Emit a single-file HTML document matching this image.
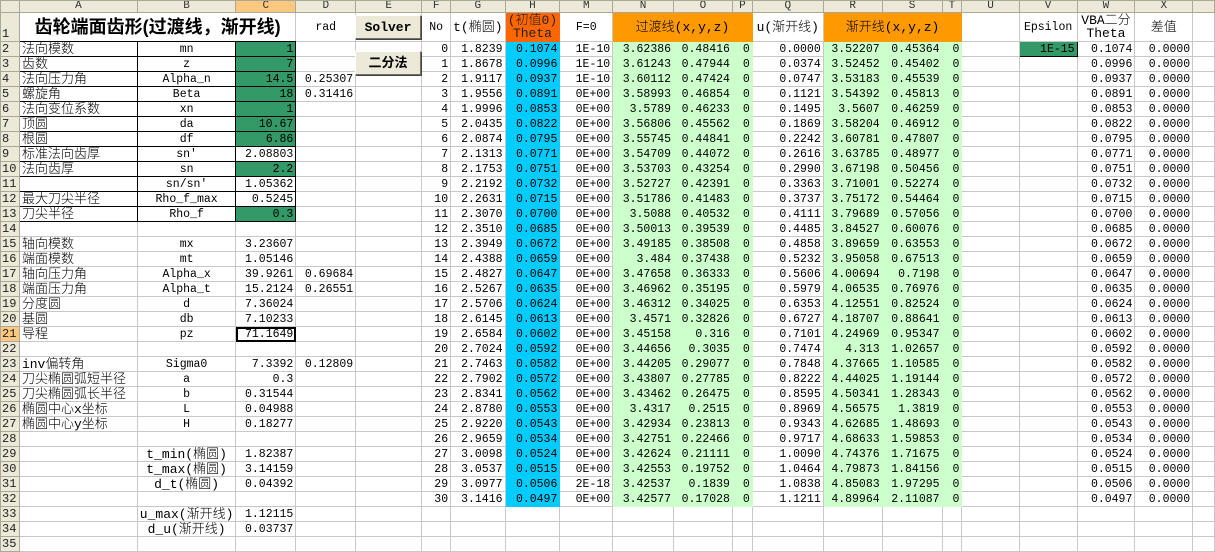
<!DOCTYPE html>
<html><head><meta charset="utf-8"><style>
body{margin:0;width:1215px;height:545px;overflow:hidden;background:#fff;position:relative}
table{border-collapse:collapse;table-layout:fixed;position:absolute;left:0;top:0;font-family:"Liberation Mono","Noto Serif CJK SC",monospace;font-size:11.5px;color:#000}
tr{height:15px}
td{border:1px solid #c8c8c8;height:14px;line-height:13px;padding:0 2px;white-space:nowrap;overflow:hidden;text-align:right;box-sizing:border-box}
tr.h{height:12px}
tr.h td{background:#ece9d8;border-color:#aca899;height:12px;line-height:11px;text-align:center;font-size:11px;color:#333}
td.rh{background:#ece9d8;border-color:#aca899;text-align:left;padding:0 0 0 1px;font-size:12px;color:#222}
td.sel{background:#ffc880}
td.l{text-align:left}
td.c{text-align:center}
.k{font-size:13px;line-height:13px;font-family:"Liberation Mono","Noto Sans CJK SC",sans-serif;font-weight:300}
td.b{border:1px solid #000}
td.gd{background:#339966;border:1px solid #000}
td.cy{background:#00ccff;border-color:#00ccff}
td.g{background:#ccffcc;border-color:#ccffcc}
td.or{background:#ff9900;border-color:#ff9900}
td.orr{background:#ff6600;border-color:#ff6600}
.btn{position:absolute;left:355px;width:66px;height:24px;background:#ece9d8;border:1px solid;border-color:#fff #716f64 #716f64 #fff;box-shadow:1px 1px 0 #444;font:bold 13px "Liberation Mono","Noto Sans CJK SC",monospace;text-align:center;line-height:24px;box-sizing:border-box}
</style></head><body>
<table>
<colgroup><col style="width:19px"><col style="width:118px"><col style="width:96px"><col style="width:60px"><col style="width:60px"><col style="width:67px"><col style="width:29px"><col style="width:54px"><col style="width:55px"><col style="width:53px"><col style="width:61px"><col style="width:59px"><col style="width:20px"><col style="width:71px"><col style="width:59px"><col style="width:60px"><col style="width:20px"><col style="width:58px"><col style="width:58px"><col style="width:58px"><col style="width:58px"><col style="width:22px"></colgroup>
<tr class="h"><td></td><td>A</td><td>B</td><td style="background:#ffc880">C</td><td>D</td><td>E</td><td>F</td><td>G</td><td>H</td><td>M</td><td>N</td><td>O</td><td>P</td><td>Q</td><td>R</td><td>S</td><td>T</td><td>U</td><td>V</td><td>W</td><td>X</td><td></td></tr>
<tr style="height:29px"><td class="rh" style="vertical-align:bottom">1</td><td colspan="3" class="c" style="font:bold 18px 'Liberation Sans','Noto Sans CJK SC',sans-serif;line-height:26px;border-bottom:1px solid #000">齿轮端面齿形(过渡线，渐开线)</td><td class="c">rad</td><td></td><td class="c">No</td><td class="c k">t(椭圆)</td><td class="orr c k" style="white-space:normal;color:#222">(初值0) Theta</td><td class="c">F=0</td><td colspan="3" class="or c k">过渡线(x,y,z)</td><td class="c k">u(渐开线)</td><td colspan="3" class="or c k">渐开线(x,y,z)</td><td></td><td class="c">Epsilon</td><td class="c k" style="white-space:normal">VBA二分 Theta</td><td class="c k">差值</td><td></td></tr>
<tr><td class="rh">2</td><td class="b l k">法向模数</td><td class="b c">mn</td><td class="gd">1</td><td></td><td></td><td>0</td><td>1.8239</td><td class="cy">0.1074</td><td>1E-10</td><td class="g">3.62386</td><td class="g">0.48416</td><td class="g">0</td><td>0.0000</td><td class="g">3.52207</td><td class="g">0.45364</td><td class="g">0</td><td></td><td class="gd">1E-15</td><td>0.1074</td><td>0.0000</td><td></td></tr>
<tr><td class="rh">3</td><td class="b l k">齿数</td><td class="b c">z</td><td class="gd">7</td><td></td><td></td><td>1</td><td>1.8678</td><td class="cy">0.0996</td><td>1E-10</td><td class="g">3.61243</td><td class="g">0.47944</td><td class="g">0</td><td>0.0374</td><td class="g">3.52452</td><td class="g">0.45402</td><td class="g">0</td><td></td><td></td><td>0.0996</td><td>0.0000</td><td></td></tr>
<tr><td class="rh">4</td><td class="b l k">法向压力角</td><td class="b c">Alpha_n</td><td class="gd">14.5</td><td>0.25307</td><td></td><td>2</td><td>1.9117</td><td class="cy">0.0937</td><td>1E-10</td><td class="g">3.60112</td><td class="g">0.47424</td><td class="g">0</td><td>0.0747</td><td class="g">3.53183</td><td class="g">0.45539</td><td class="g">0</td><td></td><td></td><td>0.0937</td><td>0.0000</td><td></td></tr>
<tr><td class="rh">5</td><td class="b l k">螺旋角</td><td class="b c">Beta</td><td class="gd">18</td><td>0.31416</td><td></td><td>3</td><td>1.9556</td><td class="cy">0.0891</td><td>0E+00</td><td class="g">3.58993</td><td class="g">0.46854</td><td class="g">0</td><td>0.1121</td><td class="g">3.54392</td><td class="g">0.45813</td><td class="g">0</td><td></td><td></td><td>0.0891</td><td>0.0000</td><td></td></tr>
<tr><td class="rh">6</td><td class="b l k">法向变位系数</td><td class="b c">xn</td><td class="gd">1</td><td></td><td></td><td>4</td><td>1.9996</td><td class="cy">0.0853</td><td>0E+00</td><td class="g">3.5789</td><td class="g">0.46233</td><td class="g">0</td><td>0.1495</td><td class="g">3.5607</td><td class="g">0.46259</td><td class="g">0</td><td></td><td></td><td>0.0853</td><td>0.0000</td><td></td></tr>
<tr><td class="rh">7</td><td class="b l k">顶圆</td><td class="b c">da</td><td class="gd">10.67</td><td></td><td></td><td>5</td><td>2.0435</td><td class="cy">0.0822</td><td>0E+00</td><td class="g">3.56806</td><td class="g">0.45562</td><td class="g">0</td><td>0.1869</td><td class="g">3.58204</td><td class="g">0.46912</td><td class="g">0</td><td></td><td></td><td>0.0822</td><td>0.0000</td><td></td></tr>
<tr><td class="rh">8</td><td class="b l k">根圆</td><td class="b c">df</td><td class="gd">6.86</td><td></td><td></td><td>6</td><td>2.0874</td><td class="cy">0.0795</td><td>0E+00</td><td class="g">3.55745</td><td class="g">0.44841</td><td class="g">0</td><td>0.2242</td><td class="g">3.60781</td><td class="g">0.47807</td><td class="g">0</td><td></td><td></td><td>0.0795</td><td>0.0000</td><td></td></tr>
<tr><td class="rh">9</td><td class="b l k">标准法向齿厚</td><td class="b c">sn'</td><td class="b">2.08803</td><td></td><td></td><td>7</td><td>2.1313</td><td class="cy">0.0771</td><td>0E+00</td><td class="g">3.54709</td><td class="g">0.44072</td><td class="g">0</td><td>0.2616</td><td class="g">3.63785</td><td class="g">0.48977</td><td class="g">0</td><td></td><td></td><td>0.0771</td><td>0.0000</td><td></td></tr>
<tr><td class="rh">10</td><td class="b l k">法向齿厚</td><td class="b c">sn</td><td class="gd">2.2</td><td></td><td></td><td>8</td><td>2.1753</td><td class="cy">0.0751</td><td>0E+00</td><td class="g">3.53703</td><td class="g">0.43254</td><td class="g">0</td><td>0.2990</td><td class="g">3.67198</td><td class="g">0.50456</td><td class="g">0</td><td></td><td></td><td>0.0751</td><td>0.0000</td><td></td></tr>
<tr><td class="rh">11</td><td class="b l"></td><td class="b c">sn/sn'</td><td class="b">1.05362</td><td></td><td></td><td>9</td><td>2.2192</td><td class="cy">0.0732</td><td>0E+00</td><td class="g">3.52727</td><td class="g">0.42391</td><td class="g">0</td><td>0.3363</td><td class="g">3.71001</td><td class="g">0.52274</td><td class="g">0</td><td></td><td></td><td>0.0732</td><td>0.0000</td><td></td></tr>
<tr><td class="rh">12</td><td class="b l k">最大刀尖半径</td><td class="b c">Rho_f_max</td><td class="b">0.5245</td><td></td><td></td><td>10</td><td>2.2631</td><td class="cy">0.0715</td><td>0E+00</td><td class="g">3.51786</td><td class="g">0.41483</td><td class="g">0</td><td>0.3737</td><td class="g">3.75172</td><td class="g">0.54464</td><td class="g">0</td><td></td><td></td><td>0.0715</td><td>0.0000</td><td></td></tr>
<tr><td class="rh">13</td><td class="b l k">刀尖半径</td><td class="b c">Rho_f</td><td class="gd">0.3</td><td></td><td></td><td>11</td><td>2.3070</td><td class="cy">0.0700</td><td>0E+00</td><td class="g">3.5088</td><td class="g">0.40532</td><td class="g">0</td><td>0.4111</td><td class="g">3.79689</td><td class="g">0.57056</td><td class="g">0</td><td></td><td></td><td>0.0700</td><td>0.0000</td><td></td></tr>
<tr><td class="rh">14</td><td></td><td></td><td></td><td></td><td></td><td>12</td><td>2.3510</td><td class="cy">0.0685</td><td>0E+00</td><td class="g">3.50013</td><td class="g">0.39539</td><td class="g">0</td><td>0.4485</td><td class="g">3.84527</td><td class="g">0.60076</td><td class="g">0</td><td></td><td></td><td>0.0685</td><td>0.0000</td><td></td></tr>
<tr><td class="rh">15</td><td class="l k">轴向模数</td><td class="c">mx</td><td>3.23607</td><td></td><td></td><td>13</td><td>2.3949</td><td class="cy">0.0672</td><td>0E+00</td><td class="g">3.49185</td><td class="g">0.38508</td><td class="g">0</td><td>0.4858</td><td class="g">3.89659</td><td class="g">0.63553</td><td class="g">0</td><td></td><td></td><td>0.0672</td><td>0.0000</td><td></td></tr>
<tr><td class="rh">16</td><td class="l k">端面模数</td><td class="c">mt</td><td>1.05146</td><td></td><td></td><td>14</td><td>2.4388</td><td class="cy">0.0659</td><td>0E+00</td><td class="g">3.484</td><td class="g">0.37438</td><td class="g">0</td><td>0.5232</td><td class="g">3.95058</td><td class="g">0.67513</td><td class="g">0</td><td></td><td></td><td>0.0659</td><td>0.0000</td><td></td></tr>
<tr><td class="rh">17</td><td class="l k">轴向压力角</td><td class="c">Alpha_x</td><td>39.9261</td><td>0.69684</td><td></td><td>15</td><td>2.4827</td><td class="cy">0.0647</td><td>0E+00</td><td class="g">3.47658</td><td class="g">0.36333</td><td class="g">0</td><td>0.5606</td><td class="g">4.00694</td><td class="g">0.7198</td><td class="g">0</td><td></td><td></td><td>0.0647</td><td>0.0000</td><td></td></tr>
<tr><td class="rh">18</td><td class="l k">端面压力角</td><td class="c">Alpha_t</td><td>15.2124</td><td>0.26551</td><td></td><td>16</td><td>2.5267</td><td class="cy">0.0635</td><td>0E+00</td><td class="g">3.46962</td><td class="g">0.35195</td><td class="g">0</td><td>0.5979</td><td class="g">4.06535</td><td class="g">0.76976</td><td class="g">0</td><td></td><td></td><td>0.0635</td><td>0.0000</td><td></td></tr>
<tr><td class="rh">19</td><td class="l k">分度圆</td><td class="c">d</td><td>7.36024</td><td></td><td></td><td>17</td><td>2.5706</td><td class="cy">0.0624</td><td>0E+00</td><td class="g">3.46312</td><td class="g">0.34025</td><td class="g">0</td><td>0.6353</td><td class="g">4.12551</td><td class="g">0.82524</td><td class="g">0</td><td></td><td></td><td>0.0624</td><td>0.0000</td><td></td></tr>
<tr><td class="rh">20</td><td class="l k">基圆</td><td class="c">db</td><td>7.10233</td><td></td><td></td><td>18</td><td>2.6145</td><td class="cy">0.0613</td><td>0E+00</td><td class="g">3.4571</td><td class="g">0.32826</td><td class="g">0</td><td>0.6727</td><td class="g">4.18707</td><td class="g">0.88641</td><td class="g">0</td><td></td><td></td><td>0.0613</td><td>0.0000</td><td></td></tr>
<tr><td class="rh sel">21</td><td class="l k">导程</td><td class="c">pz</td><td style="outline:2px solid #000;outline-offset:-2px">71.1649</td><td></td><td></td><td>19</td><td>2.6584</td><td class="cy">0.0602</td><td>0E+00</td><td class="g">3.45158</td><td class="g">0.316</td><td class="g">0</td><td>0.7101</td><td class="g">4.24969</td><td class="g">0.95347</td><td class="g">0</td><td></td><td></td><td>0.0602</td><td>0.0000</td><td></td></tr>
<tr><td class="rh">22</td><td></td><td></td><td></td><td></td><td></td><td>20</td><td>2.7024</td><td class="cy">0.0592</td><td>0E+00</td><td class="g">3.44656</td><td class="g">0.3035</td><td class="g">0</td><td>0.7474</td><td class="g">4.313</td><td class="g">1.02657</td><td class="g">0</td><td></td><td></td><td>0.0592</td><td>0.0000</td><td></td></tr>
<tr><td class="rh">23</td><td class="l k">inv偏转角</td><td class="c">Sigma0</td><td>7.3392</td><td>0.12809</td><td></td><td>21</td><td>2.7463</td><td class="cy">0.0582</td><td>0E+00</td><td class="g">3.44205</td><td class="g">0.29077</td><td class="g">0</td><td>0.7848</td><td class="g">4.37665</td><td class="g">1.10585</td><td class="g">0</td><td></td><td></td><td>0.0582</td><td>0.0000</td><td></td></tr>
<tr><td class="rh">24</td><td class="l k">刀尖椭圆弧短半径</td><td class="c">a</td><td>0.3</td><td></td><td></td><td>22</td><td>2.7902</td><td class="cy">0.0572</td><td>0E+00</td><td class="g">3.43807</td><td class="g">0.27785</td><td class="g">0</td><td>0.8222</td><td class="g">4.44025</td><td class="g">1.19144</td><td class="g">0</td><td></td><td></td><td>0.0572</td><td>0.0000</td><td></td></tr>
<tr><td class="rh">25</td><td class="l k">刀尖椭圆弧长半径</td><td class="c">b</td><td>0.31544</td><td></td><td></td><td>23</td><td>2.8341</td><td class="cy">0.0562</td><td>0E+00</td><td class="g">3.43462</td><td class="g">0.26475</td><td class="g">0</td><td>0.8595</td><td class="g">4.50341</td><td class="g">1.28343</td><td class="g">0</td><td></td><td></td><td>0.0562</td><td>0.0000</td><td></td></tr>
<tr><td class="rh">26</td><td class="l k">椭圆中心x坐标</td><td class="c">L</td><td>0.04988</td><td></td><td></td><td>24</td><td>2.8780</td><td class="cy">0.0553</td><td>0E+00</td><td class="g">3.4317</td><td class="g">0.2515</td><td class="g">0</td><td>0.8969</td><td class="g">4.56575</td><td class="g">1.3819</td><td class="g">0</td><td></td><td></td><td>0.0553</td><td>0.0000</td><td></td></tr>
<tr><td class="rh">27</td><td class="l k">椭圆中心y坐标</td><td class="c">H</td><td>0.18277</td><td></td><td></td><td>25</td><td>2.9220</td><td class="cy">0.0543</td><td>0E+00</td><td class="g">3.42934</td><td class="g">0.23813</td><td class="g">0</td><td>0.9343</td><td class="g">4.62685</td><td class="g">1.48693</td><td class="g">0</td><td></td><td></td><td>0.0543</td><td>0.0000</td><td></td></tr>
<tr><td class="rh">28</td><td></td><td></td><td></td><td></td><td></td><td>26</td><td>2.9659</td><td class="cy">0.0534</td><td>0E+00</td><td class="g">3.42751</td><td class="g">0.22466</td><td class="g">0</td><td>0.9717</td><td class="g">4.68633</td><td class="g">1.59853</td><td class="g">0</td><td></td><td></td><td>0.0534</td><td>0.0000</td><td></td></tr>
<tr><td class="rh">29</td><td></td><td class="c k">t_min(椭圆)</td><td>1.82387</td><td></td><td></td><td>27</td><td>3.0098</td><td class="cy">0.0524</td><td>0E+00</td><td class="g">3.42624</td><td class="g">0.21111</td><td class="g">0</td><td>1.0090</td><td class="g">4.74376</td><td class="g">1.71675</td><td class="g">0</td><td></td><td></td><td>0.0524</td><td>0.0000</td><td></td></tr>
<tr><td class="rh">30</td><td></td><td class="c k">t_max(椭圆)</td><td>3.14159</td><td></td><td></td><td>28</td><td>3.0537</td><td class="cy">0.0515</td><td>0E+00</td><td class="g">3.42553</td><td class="g">0.19752</td><td class="g">0</td><td>1.0464</td><td class="g">4.79873</td><td class="g">1.84156</td><td class="g">0</td><td></td><td></td><td>0.0515</td><td>0.0000</td><td></td></tr>
<tr><td class="rh">31</td><td></td><td class="c k">d_t(椭圆)</td><td>0.04392</td><td></td><td></td><td>29</td><td>3.0977</td><td class="cy">0.0506</td><td>2E-18</td><td class="g">3.42537</td><td class="g">0.1839</td><td class="g">0</td><td>1.0838</td><td class="g">4.85083</td><td class="g">1.97295</td><td class="g">0</td><td></td><td></td><td>0.0506</td><td>0.0000</td><td></td></tr>
<tr><td class="rh">32</td><td></td><td></td><td></td><td></td><td></td><td>30</td><td>3.1416</td><td class="cy">0.0497</td><td>0E+00</td><td class="g">3.42577</td><td class="g">0.17028</td><td class="g">0</td><td>1.1211</td><td class="g">4.89964</td><td class="g">2.11087</td><td class="g">0</td><td></td><td></td><td>0.0497</td><td>0.0000</td><td></td></tr>
<tr><td class="rh">33</td><td></td><td class="c k">u_max(渐开线)</td><td>1.12115</td><td></td><td></td><td></td><td></td><td></td><td></td><td></td><td></td><td></td><td></td><td></td><td></td><td></td><td></td><td></td><td></td><td></td><td></td></tr>
<tr><td class="rh">34</td><td></td><td class="c k">d_u(渐开线)</td><td>0.03737</td><td></td><td></td><td></td><td></td><td></td><td></td><td></td><td></td><td></td><td></td><td></td><td></td><td></td><td></td><td></td><td></td><td></td><td></td></tr>
<tr><td class="rh">35</td><td></td><td></td><td></td><td></td><td></td><td></td><td></td><td></td><td></td><td></td><td></td><td></td><td></td><td></td><td></td><td></td><td></td><td></td><td></td><td></td><td></td></tr>
</table>
<div class="btn" style="top:15px">Solver</div>
<div class="btn" style="top:51px">二分法</div>
</body></html>
